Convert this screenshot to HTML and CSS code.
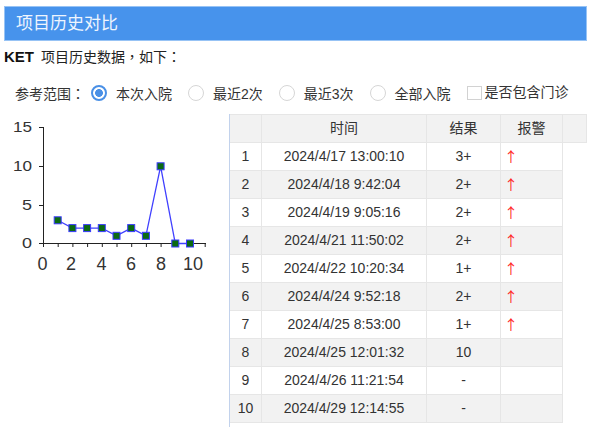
FILE: index.html
```html
<!DOCTYPE html>
<html lang="zh-CN">
<head>
<meta charset="utf-8">
<title>项目历史对比</title>
<link rel="stylesheet" href="styles.css">
</head>
<body>
<div class="page">
  <div class="title-bar">项目历史对比</div>
  <div class="intro"><b>KET</b>项目历史数据<span class="punc" lang="zh-TW">，</span>如下<span class="punc" lang="zh-TW">：</span></div>
  <div class="range">
    <span class="range-label">参考范围<span class="punc" lang="zh-TW">：</span></span>
    <label class="opt"><span class="radio on"></span>本次入院</label>
    <label class="opt"><span class="radio"></span>最近2次</label>
    <label class="opt"><span class="radio"></span>最近3次</label>
    <label class="opt"><span class="radio"></span>全部入院</label>
    <label class="chk"><span class="box"></span><span class="chk-text">是否包含门诊</span></label>
  </div>
  <div class="content">
    <div class="chart">
      <svg class="chart-svg" width="225" height="313" viewBox="4 114 225 313" xmlns="http://www.w3.org/2000/svg">
        <g class="axis" stroke="#222" stroke-width="1" fill="none">
          <line x1="43.5" y1="127" x2="43.5" y2="244"/>
          <line x1="43" y1="243.5" x2="206" y2="243.5"/>
          <line x1="39" y1="127.5" x2="43" y2="127.5"/>
          <line x1="39" y1="166.5" x2="43" y2="166.5"/>
          <line x1="39" y1="205.5" x2="43" y2="205.5"/>
          <line x1="39" y1="243.5" x2="43" y2="243.5"/>
          <line x1="43.5" y1="243" x2="43.5" y2="247"/>
          <line x1="58.2" y1="243" x2="58.2" y2="247"/>
          <line x1="72.9" y1="243" x2="72.9" y2="247"/>
          <line x1="87.6" y1="243" x2="87.6" y2="247"/>
          <line x1="102.3" y1="243" x2="102.3" y2="247"/>
          <line x1="117" y1="243" x2="117" y2="247"/>
          <line x1="131.7" y1="243" x2="131.7" y2="247"/>
          <line x1="146.4" y1="243" x2="146.4" y2="247"/>
          <line x1="161.1" y1="243" x2="161.1" y2="247"/>
          <line x1="175.8" y1="243" x2="175.8" y2="247"/>
          <line x1="190.5" y1="243" x2="190.5" y2="247"/>
          <line x1="205.2" y1="243" x2="205.2" y2="247"/>
        </g>
        <g class="ylab" fill="#333" font-size="14" text-anchor="end">
          <text x="32" y="132" textLength="19" lengthAdjust="spacingAndGlyphs">15</text>
          <text x="32" y="171" textLength="19" lengthAdjust="spacingAndGlyphs">10</text>
          <text x="32" y="210" textLength="10" lengthAdjust="spacingAndGlyphs">5</text>
          <text x="32" y="248" textLength="10" lengthAdjust="spacingAndGlyphs">0</text>
        </g>
        <g class="xlab" fill="#333" font-size="18" text-anchor="middle">
          <text x="42.5" y="270">0</text>
          <text x="71" y="270">2</text>
          <text x="101.5" y="270">4</text>
          <text x="131" y="270">6</text>
          <text x="161" y="270">8</text>
          <text x="193" y="270">10</text>
        </g>
        <polyline fill="none" stroke="#4040ff" stroke-width="1.3"
          points="57.7,220.3 72.4,228.1 87.1,228.1 101.8,228.1 116.5,235.8 131.2,228.1 145.9,235.8 160.6,166.3 175.3,243.5 190,243.5"/>
        <g fill="#0b6a12" stroke="#3b3bff" stroke-width="1">
          <rect x="54.2" y="216.8" width="7" height="7"/>
          <rect x="68.9" y="224.6" width="7" height="7"/>
          <rect x="83.6" y="224.6" width="7" height="7"/>
          <rect x="98.3" y="224.6" width="7" height="7"/>
          <rect x="113" y="232.3" width="7" height="7"/>
          <rect x="127.7" y="224.6" width="7" height="7"/>
          <rect x="142.4" y="232.3" width="7" height="7"/>
          <rect x="157.1" y="162.8" width="7" height="7"/>
          <rect x="171.8" y="240" width="7" height="7"/>
          <rect x="186.5" y="240" width="7" height="7"/>
        </g>
      </svg>
    </div>
    <div class="grid-wrap">
      <table class="grid">
        <thead>
          <tr>
            <th class="c1"></th>
            <th class="c2">时间</th>
            <th class="c3">结果</th>
            <th class="c4">报警</th>
            <th class="c5"></th>
          </tr>
        </thead>
        <tbody>
          <tr><td>1</td><td>2024/4/17 13:00:10</td><td>3+</td><td class="alarm">↑</td></tr>
          <tr class="alt"><td>2</td><td>2024/4/18 9:42:04</td><td>2+</td><td class="alarm">↑</td></tr>
          <tr><td>3</td><td>2024/4/19 9:05:16</td><td>2+</td><td class="alarm">↑</td></tr>
          <tr class="alt"><td>4</td><td>2024/4/21 11:50:02</td><td>2+</td><td class="alarm">↑</td></tr>
          <tr><td>5</td><td>2024/4/22 10:20:34</td><td>1+</td><td class="alarm">↑</td></tr>
          <tr class="alt"><td>6</td><td>2024/4/24 9:52:18</td><td>2+</td><td class="alarm">↑</td></tr>
          <tr><td>7</td><td>2024/4/25 8:53:00</td><td>1+</td><td class="alarm">↑</td></tr>
          <tr class="alt"><td>8</td><td>2024/4/25 12:01:32</td><td>10</td><td class="alarm"></td></tr>
          <tr><td>9</td><td>2024/4/26 11:21:54</td><td>-</td><td class="alarm"></td></tr>
          <tr class="alt"><td>10</td><td>2024/4/29 12:14:55</td><td>-</td><td class="alarm"></td></tr>
        </tbody>
      </table>
    </div>
  </div>
</div>
</body>
</html>
```

FILE: styles.css
```css
body {
  margin: 0;
  background: #fff;
  color: #333;
  font-family: "Liberation Sans", "Noto Sans CJK SC", sans-serif;
}

.page {
  width: 594px;
  box-sizing: border-box;
  padding: 6px 0 0 4px;
}

.title-bar {
  width: 583px;
  height: 35px;
  box-sizing: border-box;
  background: #4793ec;
  border: 1px solid #97c3f5;
  color: #eef5fe;
  font-size: 17px;
  line-height: 33px;
  padding-left: 11px;
}

.punc {
  font-family: "Noto Sans CJK TC", "Noto Sans CJK SC", sans-serif;
}

.intro {
  margin-top: 5px;
  height: 20px;
  line-height: 20px;
  font-size: 14px;
  color: #222;
  white-space: nowrap;
}

.intro b {
  font-size: 15px;
  color: #111;
  margin-right: 7px;
}

.range {
  margin-top: 16px;
  height: 22px;
  display: flex;
  align-items: center;
  padding-left: 11px;
  font-size: 14px;
  color: #333;
  white-space: nowrap;
}

.range > * {
  flex-shrink: 0;
}

.range-label {
  margin-right: 6px;
}

.opt {
  display: flex;
  align-items: center;
  margin-right: 16px;
}

.radio {
  width: 16px;
  height: 16px;
  box-sizing: border-box;
  border: 1px solid #d6d6d6;
  border-radius: 50%;
  margin-right: 9px;
  background: #fff;
}

.radio.on {
  border: 2px solid #4a90e6;
  background: radial-gradient(circle, #4a90e6 0 3.6px, #fff 4.2px);
}

.chk {
  display: flex;
  align-items: center;
}

.box {
  width: 15px;
  height: 14px;
  box-sizing: border-box;
  border: 1px solid #d2d2d2;
  background: #fff;
  margin-right: 3px;
}

.chk-text {
  margin-bottom: 4px;
}

.content {
  margin-top: 10px;
  display: flex;
}

.chart {
  width: 225px;
  height: 313px;
}

.chart-svg {
  display: block;
  font-family: "Liberation Sans", sans-serif;
}

.grid-wrap {
  width: 357px;
  height: 313px;
  border-left: 1px solid #c2d2ec;
}

.grid {
  border-collapse: separate;
  border-spacing: 0;
  table-layout: fixed;
  width: 357px;
  font-size: 14px;
  color: #333;
}

.grid th,
.grid td {
  box-sizing: border-box;
  padding: 0;
  line-height: 27px;
  text-align: center;
  border-right: 1px solid #e6e6e6;
  border-bottom: 1px solid #e6e6e6;
  white-space: nowrap;
}

.grid th {
  border-top: 1px solid #e6e6e6;
  background: #f2f2f2;
  font-weight: normal;
  color: #333;
}

.grid .c1 { width: 32px; }
.grid .c2 { width: 165px; }
.grid .c3 { width: 74px; }
.grid .c4 { width: 62px; }
.grid .c5 { width: 24px; }

.grid tr.alt td {
  background: #f2f2f2;
}

.grid td.alarm {
  text-align: left;
  padding-left: 3px;
  color: #ff2424;
  font-family: "Noto Sans CJK SC", sans-serif;
  font-size: 14px;
}
```
